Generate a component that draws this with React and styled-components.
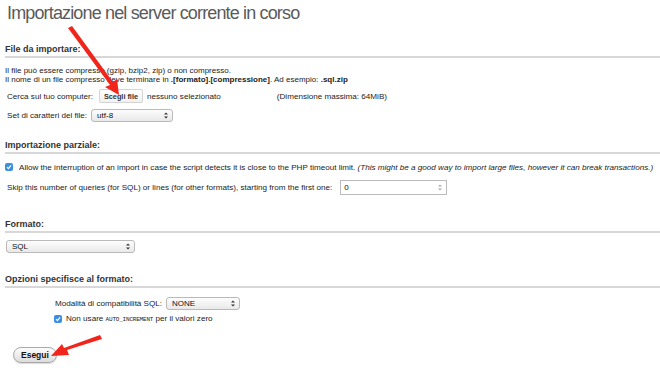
import React from "react"
import styled, { createGlobalStyle } from "styled-components"

const GlobalStyle = createGlobalStyle`
  html, body {
    margin: 0;
    padding: 0;
    background: #fff;
    font-family: "Liberation Sans", Arial, sans-serif;
    color: #222;
  }
`

const Page = styled.div`
  position: relative;
  width: 660px;
  height: 368px;
  overflow: hidden;
  padding: 0 0 0 5px;
  box-sizing: border-box;
`

const Title = styled.h1`
  margin: 0;
  padding: 1px 0 0 2px;
  font-size: 18px;
  font-weight: normal;
  color: #5a5a5a;
  letter-spacing: -0.85px;
  line-height: 24px;
`

const Section = styled.section`
  margin-top: ${(p) => p.$top}px;
`

const Heading = styled.h2`
  margin: 0;
  font-size: 9px;
  font-weight: bold;
  color: #333;
  line-height: 11px;
  padding-bottom: 1px;
  border-bottom: 2px solid #d8d8d8;
  margin-right: -20px;
`

const Text = styled.p`
  margin: 0;
  font-size: 8px;
  line-height: 9px;
  color: #222;
`

const Row = styled.div`
  display: flex;
  align-items: center;
  gap: ${(p) => p.$gap || 4}px;
  height: ${(p) => p.$h || 14}px;
  margin-top: ${(p) => p.$top || 0}px;
  padding-left: ${(p) => p.$indent || 0}px;
  font-size: 8.1px;
  color: #222;
  white-space: nowrap;
`

const FileButton = styled.span`
  display: inline-flex;
  align-items: center;
  height: 12px;
  padding: 0 4px;
  border: 1px solid #d4d4d4;
  border-radius: 2px;
  background: linear-gradient(#fff, #f1f1f1);
  font-size: 7.3px;
  font-weight: bold;
  color: #333;
  margin-left: 2px;
`

const Select = styled.div`
  display: flex;
  align-items: center;
  justify-content: space-between;
  box-sizing: border-box;
  width: ${(p) => p.$w}px;
  height: 13px;
  padding: 0 4px 0 5px;
  border: 1px solid #b9b9b9;
  border-radius: 3px;
  background: linear-gradient(#fdfdfd, #e9e9e9);
  font-size: 8px;
  color: #111;
`

const NumberInput = styled.div`
  display: flex;
  align-items: center;
  justify-content: space-between;
  box-sizing: border-box;
  width: 107px;
  height: 15px;
  padding: 0 4px 0 3px;
  border: 1px solid #bbb;
  background: #fff;
  font-size: 8px;
  color: #111;
`

const Check = styled.span`
  display: inline-flex;
  align-items: center;
  justify-content: center;
  width: 8px;
  height: 8px;
  border-radius: 2px;
  background: #3b8fe0;
  flex: none;
`

const Mono = styled.span`
  font-family: "Liberation Mono", monospace;
  font-size: 6px;
  letter-spacing: -0.2px;
`

const Submit = styled.button`
  display: block;
  margin: 23px 0 0 8px;
  height: 16px;
  padding: 0 7px;
  border: 1px solid #aaa;
  border-radius: 8px;
  background: linear-gradient(#fdfdfd, #dcdcdc);
  box-shadow: 0 1px 1px rgba(0, 0, 0, 0.15);
  font-family: "Liberation Sans", Arial, sans-serif;
  font-size: 8.5px;
  font-weight: bold;
  color: #111;
`

const Overlay = styled.svg`
  position: absolute;
  left: 0;
  top: 0;
  pointer-events: none;
`

const Spinner = ({ color = "#333" }) => (
  <svg width="4" height="7" viewBox="0 0 4 7">
    <path d="M0 2.6 L2 0.4 L4 2.6 Z M0 4.4 L2 6.6 L4 4.4 Z" fill={color} />
  </svg>
)

const SelectBox = ({ w, children }) => (
  <Select $w={w}>
    <span>{children}</span>
    <Spinner />
  </Select>
)

const Tick = () => (
  <Check>
    <svg width="6" height="6" viewBox="0 0 6 6">
      <path d="M1 3.2 L2.4 4.6 L5 1.4" stroke="#fff" strokeWidth="1.2" fill="none" />
    </svg>
  </Check>
)

export default function App() {
  return (
    <>
      <GlobalStyle />
      <Page>
        <Title>Importazione nel server corrente in corso</Title>

        <Section $top={19}>
          <Heading>File da importare:</Heading>
          <Text style={{ marginTop: 8 }}>
            Il file può essere compresso (gzip, bzip2, zip) o non compresso.
          </Text>
          <Text>
            Il nome di un file compresso deve terminare in <b>.[formato].[compressione]</b>. Ad esempio: <b>.sql.zip</b>
          </Text>
          <Row $top={5} $indent={2} $h={14}>
            <span>Cerca sul tuo computer:</span>
            <FileButton>Scegli file</FileButton>
            <span>nessuno selezionato</span>
            <span style={{ marginLeft: 52 }}>(Dimensione massima: 64MiB)</span>
          </Row>
          <Row $top={5} $indent={2} $h={14}>
            <span>Set di caratteri del file:</span>
            <SelectBox w={82}>utf-8</SelectBox>
          </Row>
        </Section>

        <Section $top={18}>
          <Heading>Importazione parziale:</Heading>
          <Row $top={6} $h={14} $gap={6}>
            <Tick />
            <span>
              Allow the interruption of an import in case the script detects it is close to the PHP timeout limit.{" "}
              <i>(This might be a good way to import large files, however it can break transactions.)</i>
            </span>
          </Row>
          <Row $top={5} $indent={2} $h={16} $gap={8}>
            <span>Skip this number of queries (for SQL) or lines (for other formats), starting from the first one:</span>
            <NumberInput>
              <span>0</span>
              <Spinner color="#aaa" />
            </NumberInput>
          </Row>
        </Section>

        <Section $top={24}>
          <Heading>Formato:</Heading>
          <Row $top={6} $indent={1} $h={14}>
            <SelectBox w={129}>SQL</SelectBox>
          </Row>
        </Section>

        <Section $top={21}>
          <Heading>Opzioni specifisce al formato:</Heading>
          <Row $top={8} $indent={50} $h={14}>
            <span>Modalità di compatibilità SQL:</span>
            <SelectBox w={74}>NONE</SelectBox>
          </Row>
          <Row $top={3} $indent={49} $h={11} $gap={4}>
            <Tick />
            <span>
              Non usare <Mono>AUTO_INCREMENT</Mono> per il valori zero
            </span>
          </Row>
        </Section>

        <Submit>Esegui</Submit>

        <Overlay width="660" height="368" viewBox="0 0 660 368">
          <polygon points="68,28 72,26 113,82 117,79 119,95 105,87 110,85" fill="#f0261c" />
          <polygon points="100,335 102,339 67,350 69,355 51,356 62,344 64,348" fill="#f0261c" />
        </Overlay>
      </Page>
    </>
  )
}
